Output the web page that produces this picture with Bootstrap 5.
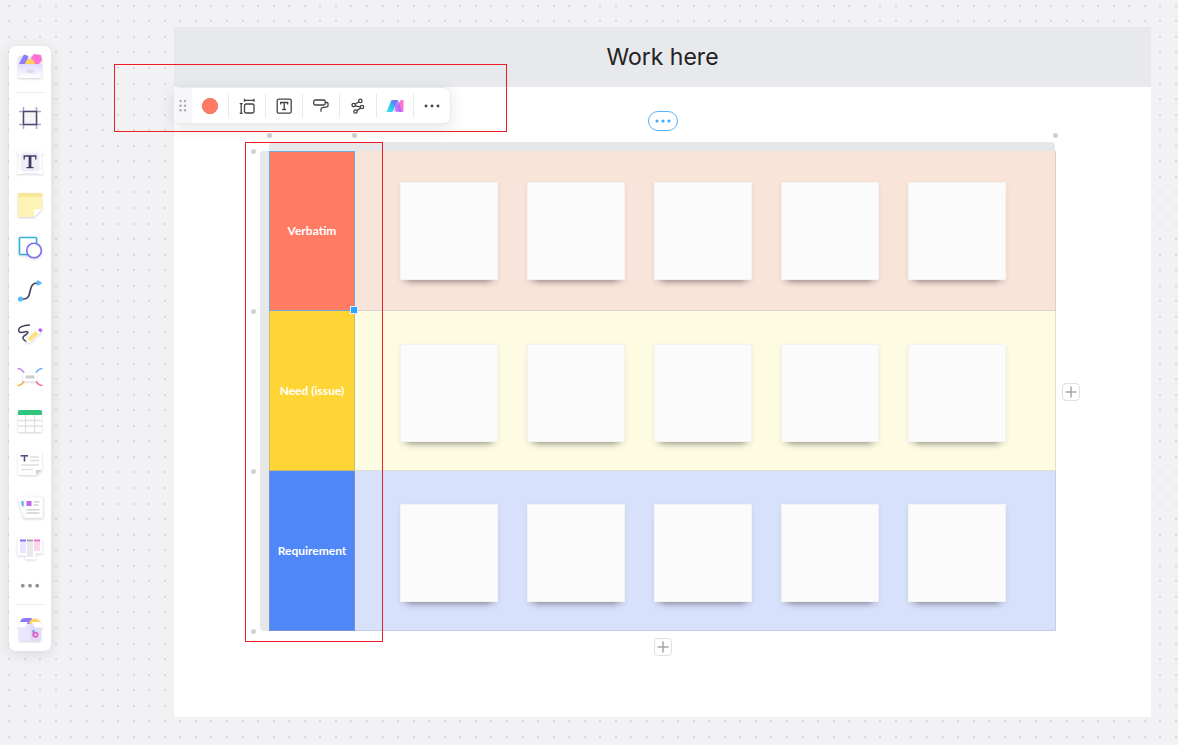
<!DOCTYPE html>
<html lang="en">
<head>
<meta charset="utf-8">
<meta name="viewport" content="width=device-width, initial-scale=1">
<title>Whiteboard</title>
<link href="https://cdn.jsdelivr.net/npm/bootstrap@5.3.0/dist/css/bootstrap.min.css" rel="stylesheet">
<style>
  body { background: #f2f2f4; font-family: Inter, "Liberation Sans", sans-serif; }
  .canvas-dots { inset: 0; z-index: 0; }
  .tool-rail { width: 42px; margin: 46px 0 0 9px; padding: 5px 0 7px; border-radius: 7px; box-shadow: 0 3px 14px rgba(40, 45, 70, .12); }
  .tool-stack { gap: 15px; }
  .rail-rule { width: 29px; height: 1px; background: #e9eaec; }
  .rail-rule.after-first { margin: 13px 0 12px; }
  .rail-rule.before-last { margin: 10px 0 11px; }
  .icon-btn { border: 0; padding: 0; background: none; display: block; line-height: 0; }
  .work-frame { margin: 27px 27px 28px 123px; min-width: 600px; padding-bottom: 61px; }
  .frame-title { height: 60px; background: #e8e9ed; color: #222; font-size: 23px; line-height: 60px; font-weight: 400; }
  .context-wrap { top: 60px; left: -1px; height: 37px; border-radius: 7px; border: 1px solid #e9eaec; box-shadow: 0 4px 16px rgba(40, 45, 70, .13); z-index: 3; }
  .drag-grip { width: 18px; background: #f7f7f9; border-radius: 6px 0 0 6px; }
  .context-wrap .icon-btn { width: 36px; height: 24px; }
  .context-wrap .icon-btn + .icon-btn { border-left: 1px solid #e8e9eb; width: 37px; }
  .menu-pill { width: 30px; height: 20px; margin: 24px auto 11px; border: 1px solid #5ab0fa; border-radius: 10px; background: #fff; }
  .board { margin: 0 95px; padding-top: 9px; }
  .top-ruler { top: 0; left: 0; right: 1px; height: 9px; background: #e6e7e9; border-radius: 4px 4px 0 0; }
  .left-ruler { top: 9px; left: -9px; bottom: 0; width: 9px; background: #e6e7e9; border-radius: 4px 0 0 4px; }
  .stop { width: 5px; height: 5px; border-radius: 50%; background: #cfd0d2; }
  .stop-col { top: -9px; margin-left: -2px; }
  .stop-row { left: -18px; margin-top: -3px; }
  .research { table-layout: fixed; border-collapse: separate; border-spacing: 0; color: #fff; }
  .research tr { height: 160px; }
  .research th { width: 86px; font: 700 12px/18px Lato, sans-serif; padding: 0; border: solid rgba(150, 160, 180, .5); border-width: 0 1px 1px; }
  .research td { padding: 0 49px 0 45px; border: solid rgba(120, 130, 150, .22); border-width: 0 1px 1px 0; }
  .research tr + tr td { padding-top: 4px; }
  .row-verbatim th { background: #ff7b63; } .row-verbatim td { background: #f9e4da; }
  .row-need th { background: #ffd535; } .row-need td { background: #fdfbe1; }
  .row-req th { background: #5087f8; } .row-req td { background: #d7e1fb; }
  .notes { display: grid; grid-template-columns: repeat(5, 1fr); gap: 29px; }
  .sticky { height: 98px; background: #fbfbfb; border: 1px solid #f3f3f4; box-shadow: 0 8px 7px -7px rgba(40, 30, 40, .5), 0 2px 5px rgba(60, 50, 60, .08); }
  .selection { top: 9px; left: 0; width: 86px; height: 160px; border: 1px solid #74a9df; pointer-events: none; }
  .resize-knob { right: -4px; bottom: -4px; width: 8px; height: 8px; background: #2ea3ff; border: 1px solid #d9eeff; }
  .add-btn { width: 18px; height: 18px; border: 1px solid #dfe0e2; border-radius: 4px; padding: 0; background: #fff; line-height: 0; }
  .add-col { left: calc(100% + 6px); top: calc(50% - 4px); }
  .add-row { margin: 7px auto 0; }
  .callout { border: 1px solid #ee1c25; pointer-events: none; z-index: 4; }
  .callout-bar { top: 37px; left: -60px; width: 393px; height: 68px; }
  .callout-col { top: 0; left: -24px; width: 138px; bottom: -11px; }
  .soft { filter: drop-shadow(0 1px 1px rgba(50, 50, 80, .22)); }
</style>
</head>
<body>
<svg class="canvas-dots position-fixed w-100 h-100" aria-hidden="true">
  <defs>
    <pattern id="dots" width="140" height="140" patternUnits="userSpaceOnUse">
      <path d="M8 6H140M8 21H140M8 37H140M8 52H140M8 68H140M8 84H140M8 99H140M8 115H140M8 130H140" stroke="#d9dadd" stroke-width="2" stroke-dasharray="2 14 2 13 2 14 2 13 2 14 2 14 2 13 2 14 2 13"/>
    </pattern>
  </defs>
  <rect width="100%" height="100%" fill="url(#dots)"/>
</svg>

<div class="d-flex align-items-start position-relative">
  <nav class="tool-rail bg-white d-flex flex-column align-items-center flex-shrink-0" aria-label="Tools">
    <button class="icon-btn" type="button" aria-label="Templates">
      <svg class="soft" width="28" height="28" viewBox="0 0 28 28"><defs><linearGradient id="tray" x2="0" y2="1"><stop stop-color="#dedcfb"/><stop offset="1" stop-color="#fff"/></linearGradient></defs>
        <rect x="2" y="5" width="24" height="12" rx="2" fill="#e7e6fa"/><path d="M3 13l4-8q1-2 3-1l2 1-1 8z" fill="#8f7cfa"/><path d="M15 7l3-4 7 1 1 5-3 4h-7z" fill="#ff71d2"/><path d="M9 13q1-5 5-5t5 5z" fill="#ffd15a"/><path d="M2 13h24v12q0 2-2 2H4q-2 0-2-2z" fill="url(#tray)"/><rect x="10" y="18" width="8" height="4" rx="2" fill="#dcdaf5"/></svg>
    </button>
    <div class="rail-rule after-first"></div>
    <div class="tool-stack d-flex flex-column align-items-center">
      <button class="icon-btn" type="button" aria-label="Frame">
        <svg width="28" height="28" viewBox="0 0 28 28" fill="none"><path d="M3 6.500h22M3 19.500h22M7.500 2v22M20.500 2v22" stroke="#aaa7c8" stroke-width="1.500"/><rect x="7.500" y="6.500" width="13" height="13" fill="#f4f4f6" stroke="#4d4a70" stroke-width="1.500"/></svg>
      </button>
      <button class="icon-btn" type="button" aria-label="Text">
        <svg class="soft" width="28" height="28" viewBox="0 0 28 28"><rect x="3.500" y="3.500" width="21" height="21" fill="#eeeef8" stroke="#fff" stroke-width="2"/><path d="M1 2h5v4H1zM22 2h5v4h-5zM1 22h5v4H1zM22 22h5v4h-5z" fill="#fff"/><path d="M8.200 11.500V8h11.600v3.500" fill="none" stroke="#3d3b62" stroke-width="1.300"/><path d="M14 8v11.500" stroke="#3d3b62" stroke-width="2.800"/><path d="M10.500 19.600h7" stroke="#3d3b62" stroke-width="1.300"/></svg>
      </button>
      <button class="icon-btn" type="button" aria-label="Sticky note">
        <svg class="soft" width="28" height="28" viewBox="0 0 28 28"><path d="M3 2h22q1 0 1 1v15l-8 8H3q-1 0-1-1V3q0-1 1-1z" fill="#fcf3b5"/><path d="M2 3q0-1 1-1h22q1 0 1 1v3H2z" fill="#f6e697"/><path d="M18 26v-6q0-2 2-2h6z" fill="#fff"/></svg>
      </button>
      <button class="icon-btn" type="button" aria-label="Shapes">
        <svg class="soft" width="28" height="28" viewBox="0 0 28 28" fill="#fff"><rect x="3.500" y="3.500" width="17" height="17" rx="1" stroke="#35b4d8" stroke-width="1.600"/><circle cx="18" cy="16.500" r="7.300" stroke="#7871f3" stroke-width="1.600"/></svg>
      </button>
      <button class="icon-btn" type="button" aria-label="Connector">
        <svg width="28" height="28" viewBox="0 0 28 28"><path d="M5 22h3c9 0 3-16 13-16h2" fill="none" stroke="#45425f" stroke-width="1.700"/><circle cx="4.500" cy="22" r="2.600" fill="#57b9fb"/><path d="M21.500 4l3.500 2-3.500 2z" fill="#57b9fb" stroke="#57b9fb" stroke-linejoin="round" stroke-width="1.500"/></svg>
      </button>
      <button class="icon-btn" type="button" aria-label="Pen">
        <svg width="28" height="28" viewBox="0 0 28 28"><path d="M14 5C7 5 1 8 3 11.500c2 3 9-2 9 1 0 2-6 3-5 6 1 2 3 3 5 3" fill="none" stroke="#45425f" stroke-width="1.500"/><g class="soft"><path d="M13 20L23 10" stroke="#fff" stroke-width="6" stroke-linecap="round"/><path d="M13 20L21 12.500" stroke="#fce27c" stroke-width="4"/><path d="M22 10l2-2 2.500 2-2 2.500z" fill="#b65af2"/></g></svg>
      </button>
      <button class="icon-btn" type="button" aria-label="Mind map">
        <svg width="28" height="28" viewBox="0 0 28 28" fill="none" stroke-width="1.700"><path d="M1.500 5.500c6 0 5 4 8 6" stroke="#c08af0"/><path d="M26.500 5.500c-6 0-5 4-8 6" stroke="#6fb1f8"/><path d="M1.500 22.500c6 0 5-4 8-6" stroke="#f8b53e"/><path d="M26.500 22.500c-6 0-5-4-8-6" stroke="#f275a9"/><rect class="soft" x="7" y="9.500" width="14" height="9" rx="1" fill="#fff"/><path d="M9.500 14h9" stroke="#cdcdd2" stroke-width="3"/></svg>
      </button>
      <button class="icon-btn" type="button" aria-label="Table">
        <svg class="soft" width="28" height="28" viewBox="0 0 28 28"><rect x="2" y="4" width="24" height="22" rx="1.500" fill="#fff"/><path d="M2 9V5.500Q2 4 3.500 4h21Q26 4 26 5.500V9z" fill="#30c47c"/><path d="M2 14.500h24M2 20h24M9.500 9v17M18.500 9v17" stroke="#e2e2e5" stroke-width="1.300"/></svg>
      </button>
      <button class="icon-btn" type="button" aria-label="Document">
        <svg class="soft" width="28" height="28" viewBox="0 0 28 28"><path d="M3 3h22q1 0 1 1v17l-5 5H3q-1 0-1-1V4q0-1 1-1z" fill="#fff"/><path d="M20 26v-5h6z" fill="#d2d2d4"/><path d="M5 6v1.500M11.500 6v1.500" stroke="#514e78"/><path d="M5 6.700h7M8.500 6v6.500" stroke="#514e78" stroke-width="1.600"/><path d="M14 8h9M14 11.500h9M5 16h18M5 20.500h12" stroke="#dedee1" stroke-width="1.400"/></svg>
      </button>
      <button class="icon-btn" type="button" aria-label="Cards">
        <svg class="soft" width="28" height="28" viewBox="0 0 28 28"><path d="M2 6.500L18 2l4 18-15 5z" fill="#fff"/><path d="M5 9.500l3-.5v5l-2 .5z" fill="#55b2fb"/><rect x="8" y="5" width="19" height="21" rx="1.500" fill="#fff" stroke="#eeeef1" stroke-width=".7"/><rect x="10.500" y="9" width="5" height="5" fill="#bb67ee"/><path d="M17.500 9.700h6M17.500 13h5M10.500 17.700h13M10.500 21h13" stroke="#d0d0d3" stroke-width="1.500"/></svg>
      </button>
      <button class="icon-btn" type="button" aria-label="Kanban">
        <svg class="soft" width="28" height="28" viewBox="0 0 28 28"><path d="M3 3h22q1 0 1 1v14h-7v6h-9v-4H2V4q0-1 1-1z" fill="#fff" stroke="#fff"/><path d="M4 7h6v11H4z" fill="#e9e5ff"/><path d="M11 7h6v15h-6z" fill="#e9e9ec"/><path d="M18 7h6v9h-6z" fill="#ffd4f0"/><path d="M4 5.500h6" stroke="#7771f5" stroke-width="2"/><path d="M11 5.500h6" stroke="#a3a3a8" stroke-width="2"/><path d="M18 5.500h6" stroke="#ed6ccb" stroke-width="2"/></svg>
      </button>
      <button class="icon-btn" type="button" aria-label="More tools">
        <svg width="28" height="16" viewBox="0 0 28 16" fill="#929397"><circle cx="6.800" cy="7.700" r="1.900"/><circle cx="14" cy="7.700" r="1.900"/><circle cx="21.200" cy="7.700" r="1.900"/></svg>
      </button>
    </div>
    <div class="rail-rule before-last"></div>
    <button class="icon-btn" type="button" aria-label="Resource box">
      <svg class="soft" width="28" height="28" viewBox="0 0 28 28"><path d="M4 8q0-6 5-6h7l-2 6z" fill="#8d79f8"/><path d="M13 7q1-4 5-4.500 5 0 7 4.500l-3 1h-8z" fill="#ffd266"/><path d="M3 8h10l12 1v14q0 2-4 2H6q-3 0-3-2z" fill="#e9e7fb"/><path d="M14 8l11 1v14q0 2-4 2h-7z" fill="#e0dcf5"/><path d="M4 6h8l-3 5.500-8-.5zM15.500 6H24l3.500 5.500H19z" fill="#fff"/><path d="M17.500 14v6.500" stroke="#5b8df7" stroke-width="1.800"/><circle cx="19.500" cy="18.700" r="2.100" fill="none" stroke="#ec5ac8" stroke-width="1.700"/></svg>
    </button>
  </nav>

  <main class="work-frame bg-white position-relative flex-grow-1">
    <h1 class="frame-title text-center m-0">Work here</h1>

    <div class="context-wrap bg-white position-absolute d-flex align-items-center" role="toolbar" aria-label="Cell formatting">
      <div class="drag-grip h-100 d-flex align-items-center justify-content-center">
        <svg width="10" height="14" viewBox="0 0 10 14" fill="#a9aaae"><circle cx="2.500" cy="2" r="1.200"/><circle cx="7" cy="2" r="1.200"/><circle cx="2.500" cy="6.700" r="1.200"/><circle cx="7" cy="6.700" r="1.200"/><circle cx="2.500" cy="11.300" r="1.200"/><circle cx="7" cy="11.300" r="1.200"/></svg>
      </div>
      <button class="icon-btn" type="button" aria-label="Fill colour"><svg width="18" height="18" viewBox="0 0 18 18"><circle cx="9" cy="9" r="7.700" fill="#ff7b63" stroke="#e56d58" stroke-width=".8"/></svg></button>
      <button class="icon-btn" type="button" aria-label="Cell size"><svg width="18" height="18" viewBox="0 0 18 18" fill="none" stroke="#414246" stroke-width="1.300"><rect x="6.500" y="7" width="9.500" height="9" rx="1.500"/><path d="M6.500 3.300h9.500M6.500 1.800v3M16 1.800v3M3.200 6.700v9.600M1.700 6.700h3M1.700 16.300h3"/></svg></button>
      <button class="icon-btn" type="button" aria-label="Text style"><svg width="18" height="18" viewBox="0 0 18 18" fill="none" stroke="#414246" stroke-width="1.300"><rect x="2.200" y="2.200" width="14" height="14" rx="1.500"/><path d="M5.700 7.500v-2h7v2M9.200 5.500v7M7.300 12.500H11"/></svg></button>
      <button class="icon-btn" type="button" aria-label="Format painter"><svg width="18" height="18" viewBox="0 0 18 18" fill="none" stroke="#414246" stroke-width="1.300"><rect x="1.700" y="3" width="11.500" height="5" rx="1.500"/><path d="M13.200 5.500H15q1 0 1 1v2.200q0 1-1 1.100l-4.500.9q-1.500.3-1.500 1.500v2.600"/></svg></button>
      <button class="icon-btn" type="button" aria-label="Convert"><svg width="18" height="18" viewBox="0 0 18 18" fill="none" stroke="#414246" stroke-width="1.300"><circle cx="11.300" cy="3.900" r="1.700"/><circle cx="4.700" cy="8" r="1.700"/><circle cx="13" cy="10" r="1.700"/><circle cx="6.500" cy="14.500" r="1.700"/><path d="M6.200 7.200L9.800 4.800M6.200 8.800l5 1M8 13.600l3.600-2.700"/></svg></button>
      <button class="icon-btn" type="button" aria-label="Assistant"><svg width="18" height="18" viewBox="0 0 18 18"><defs><linearGradient id="aqua" x1="0" y1="1" x2="1" y2="0"><stop stop-color="#27f0dd"/><stop offset="1" stop-color="#3c86ff"/></linearGradient></defs><path d="M.5 15L5 4q.5-1 1.500-1h5L7 14q-.4 1-1.500 1z" fill="url(#aqua)"/><path d="M17.500 3v11q0 1-1 1h-3L11.700 9 14 4q.5-1 1.500-1z" fill="#ff73d4"/><path d="M6.500 3H11q1 0 1.500 1L16 15h-4.500q-1 0-1.300-1z" fill="#8d68fb" opacity=".75"/><path d="M9 10l2-4 2.500 8.500H8z" fill="#c56bff" opacity=".75"/></svg></button>
      <button class="icon-btn" type="button" aria-label="More actions"><svg width="18" height="18" viewBox="0 0 18 18" fill="#414246"><circle cx="3" cy="9" r="1.400"/><circle cx="9" cy="9" r="1.400"/><circle cx="15" cy="9" r="1.400"/></svg></button>
    </div>

    <button class="icon-btn menu-pill d-flex align-items-center justify-content-center" type="button" aria-label="Table menu">
      <svg width="18" height="6" viewBox="0 0 18 6" fill="#43a9fb"><circle cx="3" cy="3" r="1.600"/><circle cx="9" cy="3" r="1.600"/><circle cx="15" cy="3" r="1.600"/></svg>
    </button>

    <section class="board position-relative">
      <div class="top-ruler position-absolute"></div>
      <div class="left-ruler position-absolute"></div>
      <table class="research w-100">
        <tbody>
          <tr class="row-verbatim"><th scope="row" class="text-center">Verbatim</th><td><div class="notes"><div class="sticky"></div><div class="sticky"></div><div class="sticky"></div><div class="sticky"></div><div class="sticky"></div></div></td></tr>
          <tr class="row-need"><th scope="row" class="text-center">Need (issue)</th><td><div class="notes"><div class="sticky"></div><div class="sticky"></div><div class="sticky"></div><div class="sticky"></div><div class="sticky"></div></div></td></tr>
          <tr class="row-req"><th scope="row" class="text-center">Requirement</th><td><div class="notes"><div class="sticky"></div><div class="sticky"></div><div class="sticky"></div><div class="sticky"></div><div class="sticky"></div></div></td></tr>
        </tbody>
      </table>
      <div class="selection position-absolute"><span class="resize-knob position-absolute"></span></div>
      <span class="stop stop-col position-absolute" style="left:0"></span>
      <span class="stop stop-col position-absolute" style="left:85px"></span>
      <span class="stop stop-col position-absolute" style="left:calc(100% - 1px)"></span>
      <span class="stop stop-row position-absolute" style="top:10px"></span>
      <span class="stop stop-row position-absolute" style="top:170px"></span>
      <span class="stop stop-row position-absolute" style="top:330px"></span>
      <span class="stop stop-row position-absolute" style="top:490px"></span>
      <button class="add-btn add-col position-absolute" type="button" aria-label="Add column"><svg width="16" height="16" viewBox="0 0 16 16"><path d="M2.500 8h11M8 2.500v11" stroke="#a5a6aa" stroke-width="1.500"/></svg></button>
      <div class="callout callout-col position-absolute"></div>
    </section>
    <button class="add-btn add-row d-block" type="button" aria-label="Add row"><svg width="16" height="16" viewBox="0 0 16 16"><path d="M2.500 8h11M8 2.500v11" stroke="#a5a6aa" stroke-width="1.500"/></svg></button>

    <div class="callout callout-bar position-absolute"></div>
  </main>
</div>
<script src="https://cdn.jsdelivr.net/npm/bootstrap@5.3.0/dist/js/bootstrap.bundle.min.js"></script>
</body>
</html>
